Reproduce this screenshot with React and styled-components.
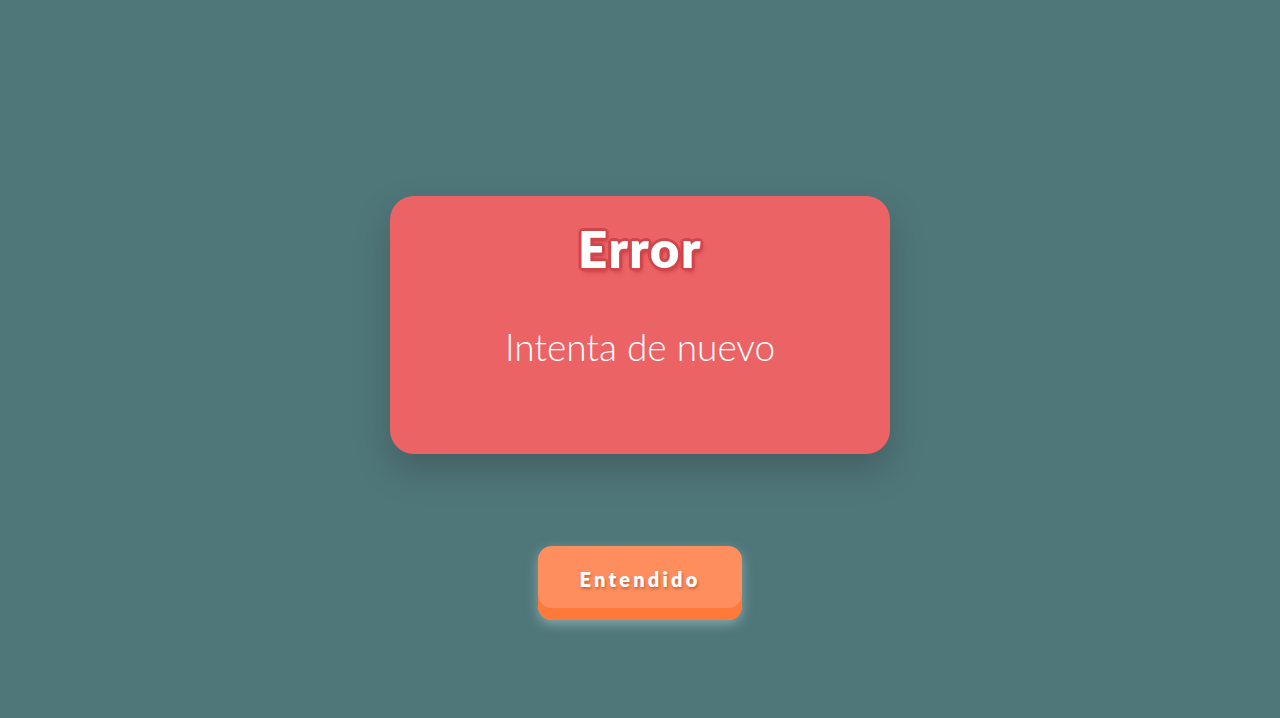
import React from 'react';
import styled, { createGlobalStyle } from 'styled-components';

const GlobalStyle = createGlobalStyle`
  html, body {
    margin: 0;
    padding: 0;
    background: #4f777a;
    font-family: Lato, "Open Sans", sans-serif;
  }
`

const Page = styled.div`
  width: 100%;
  min-height: 718px;
  display: flex;
  flex-direction: column;
  align-items: center;
  padding-top: 196px;
  box-sizing: border-box;
`

const Card = styled.div`
  width: 500px;
  height: 258px;
  box-sizing: border-box;
  background: #ec6365;
  border-radius: 24px;
  box-shadow: 0 16px 34px rgba(40, 30, 30, 0.26);
  display: flex;
  flex-direction: column;
  align-items: center;
  padding-top: 22px;
`

const Title = styled.h1`
  margin: 0;
  color: #fff;
  font-size: 51px;
  font-weight: 800;
  line-height: 62px;
  letter-spacing: 1.5px;
  text-shadow: 2px 2px 0 #d2454b, -2px -2px 0 #d2454b, 2px -2px 0 #d2454b, -2px 2px 0 #d2454b,
    0 3px 0 #d2454b, 3px 0 0 #d2454b, -3px 0 0 #d2454b, 0 -3px 0 #d2454b, 2px 4px 4px #c24047;
`

const Message = styled.p`
  margin: 45px 0 0;
  color: #fff;
  font-size: 37px;
  font-weight: 300;
  line-height: 44px;
`

const Button = styled.button`
  margin-top: 92px;
  width: 204px;
  height: 74px;
  padding: 0 0 9px;
  border: none;
  border-radius: 14px;
  background: #ff8e5e;
  box-shadow: inset 0 -12px 0 #ff7a3a, 0 4px 12px rgba(190, 215, 215, 0.5);
  color: #fff;
  font-family: Lato, "Open Sans", sans-serif;
  font-size: 20px;
  font-weight: 800;
  letter-spacing: 3.2px;
  text-shadow: 1px 2px 3px rgba(180, 80, 40, 0.7);
  cursor: pointer;
`

const App = () => {
  return (
    <>
      <GlobalStyle/>
      <Page>
        <Card>
          <Title>Error</Title>
          <Message>Intenta de nuevo</Message>
        </Card>
        <Button>Entendido</Button>
      </Page>
    </>
  )
}

export default App
